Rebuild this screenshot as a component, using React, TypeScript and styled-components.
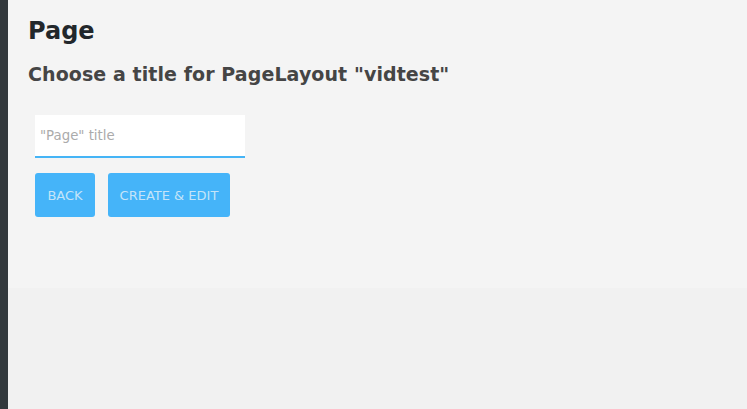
import React from "react";
import styled, { createGlobalStyle } from "styled-components";

const Global = createGlobalStyle`
  html, body { margin: 0; padding: 0; height: 100%; }
  body { background: #f1f1f1; font-family: "DejaVu Sans", sans-serif; }
  #root { height: 100%; }
`;

const Shell = styled.div`
  display: flex;
  height: 409px;
`;

const Sidebar = styled.div`
  width: 8px;
  flex: none;
  background: #33393d;
`;

const Main = styled.div`
  flex: 1;
  display: flex;
  flex-direction: column;
`;

const Panel = styled.section`
  background: #f4f4f4;
  height: 288px;
  box-sizing: border-box;
  padding: 14px 20px 0 20px;
`;

const Title = styled.h1`
  margin: 0;
  font-size: 24px;
  font-weight: bold;
  color: #22272b;
  line-height: 34px;
`;

const Subtitle = styled.h2`
  margin: 13px 0 0 0;
  font-size: 19px;
  letter-spacing: 0.08px;
  font-weight: bold;
  color: #454545;
  line-height: 26px;
`;

const Form = styled.div`
  margin-top: 28px;
  padding-left: 7px;
  display: flex;
  flex-direction: column;
  gap: 15px;
`;

const Input = styled.input`
  width: 210px;
  height: 43px;
  box-sizing: border-box;
  border: none;
  border-bottom: 2px solid #45b4f6;
  background: #fff;
  padding: 0 5px;
  font-family: "DejaVu Sans", sans-serif;
  font-size: 13.3px;
  color: #333;
  outline: none;
  &::placeholder { color: #ababab; }
`;

const Buttons = styled.div`
  display: flex;
  gap: 13px;
`;

const Button = styled.button<{ $w: number }>`
  width: ${(p) => p.$w}px;
  height: 44px;
  border: none;
  border-radius: 3px;
  background: #45b4f9;
  color: #c4e4f8;
  font-family: "DejaVu Sans", sans-serif;
  font-size: 13px;
  text-transform: uppercase;
  padding: 0;
  cursor: pointer;
`;

export default function App() {
  return (
    <>
      <Global />
      <Shell>
        <Sidebar />
        <Main>
          <Panel>
            <Title>Page</Title>
            <Subtitle>Choose a title for PageLayout "vidtest"</Subtitle>
            <Form>
              <Input placeholder={'"Page" title'} />
              <Buttons>
                <Button $w={60}>Back</Button>
                <Button $w={122}>Create &amp; Edit</Button>
              </Buttons>
            </Form>
          </Panel>
        </Main>
      </Shell>
    </>
  );
}
